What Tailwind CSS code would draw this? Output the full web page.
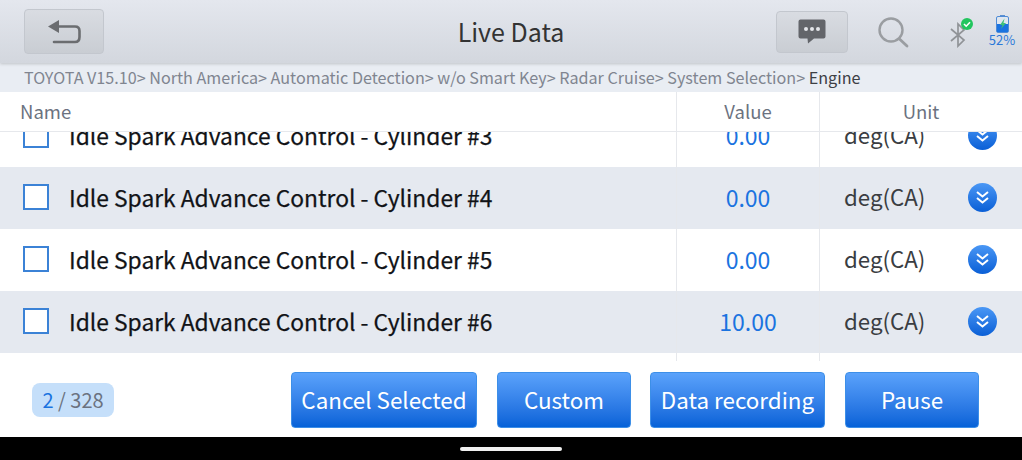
<!DOCTYPE html>
<html lang="en">
<head>
  <meta charset="UTF-8" />
  <title>Live Data</title>
  <script src="https://cdn.jsdelivr.net/npm/@tailwindcss/browser@4"></script>
</head>
<body class="w-[1022px] h-[460px] overflow-hidden bg-white flex flex-col font-['Noto_Sans_CJK_SC','Noto_Sans',sans-serif]">

  <!-- Title bar -->
  <header class="relative z-10 h-[63px] shrink-0 flex items-center pl-6 bg-gradient-to-b from-[#e4e7ee] to-[#d3d7de] shadow-[0_1px_3px_rgba(0,0,0,0.18)]">
    <button class="w-20 h-[45px] rounded border border-[#c3c7ce] bg-gradient-to-b from-[#d9dce2] to-[#c9cdd3] flex items-center justify-center">
      <svg width="34" height="25" viewBox="0 0 34 25" fill="none">
        <path d="M1 7.5 L12 1 V14 Z" fill="#6b6d70"/>
        <path d="M11 7.5 H28 Q32.5 7.5 32.5 12 V18 Q32.5 23 28 23 H7" stroke="#6b6d70" stroke-width="2.6" stroke-linecap="round"/>
      </svg>
    </button>
    <h1 class="absolute left-0 right-0 text-center text-[25px] leading-[63px] text-[#333] pointer-events-none">Live Data</h1>
    <button class="ml-[672px] w-[72px] h-[42px] rounded border border-[#c3c7ce] bg-gradient-to-b from-[#d9dce2] to-[#c9cdd3] flex items-center justify-center">
      <svg width="28" height="25" viewBox="0 0 28 25">
        <path d="M2.5 0.5 H25.5 Q27.5 0.5 27.5 2.5 V17.5 Q27.5 19.5 25.5 19.5 H16 L10 24.5 L9.5 19.5 H2.5 Q0.5 19.5 0.5 17.5 V2.5 Q0.5 0.5 2.5 0.5 Z" fill="#63656a"/>
        <circle cx="8" cy="10" r="2" fill="#e4e6ea"/><circle cx="14" cy="10" r="2" fill="#e4e6ea"/><circle cx="20" cy="10" r="2" fill="#e4e6ea"/>
      </svg>
    </button>
    <svg class="ml-[29px]" width="32" height="32" viewBox="0 0 32 32" fill="none">
      <circle cx="14" cy="14" r="11.5" stroke="#9a9da1" stroke-width="2.4"/>
      <path d="M22.5 23 L30 30" stroke="#9a9da1" stroke-width="2.8" stroke-linecap="round"/>
    </svg>
    <div class="relative ml-[40px] w-[26px] h-[30px] mt-[2px]">
      <svg class="absolute left-0 top-[4px]" width="18" height="26" viewBox="0 0 18 26" fill="none">
        <path d="M2 7 L15 18 L9 24 V2 L15 8 L2 19" stroke="#909397" stroke-width="1.7"/>
      </svg>
      <svg class="absolute left-[12px] top-0" width="12" height="12" viewBox="0 0 12 12">
        <circle cx="6" cy="6" r="6" fill="#22c55e"/>
        <path d="M3 6 L5.2 8.2 L9 4.2" stroke="#fff" stroke-width="1.6" fill="none"/>
      </svg>
    </div>
    <div class="ml-[13px] -mt-[2px] w-[28px] flex flex-col items-center">
      <svg width="13" height="18" viewBox="0 0 13 18">
        <rect x="4" y="0" width="5" height="2" fill="#5b8fd0"/>
        <rect x="0.5" y="1.5" width="12" height="16" rx="1.5" fill="#dfe6ef" stroke="#4f8bd6"/>
        <rect x="1" y="9" width="11" height="8" fill="#1a73e0"/>
        <path d="M8.5 3.5 L4 10 H6.5 L5 14 L10 8 H7.5 Z" fill="#3fc17a"/>
      </svg>
      <span class="text-[13px] leading-[14px] text-[#2a78d8]">52%</span>
    </div>
  </header>

  <!-- Breadcrumb -->
  <div class="h-[29px] shrink-0 bg-[#e9edf3] pl-6 text-[16.15px] leading-[28px] text-[#808590] whitespace-nowrap">
    TOYOTA V15.10&gt; North America&gt; Automatic Detection&gt; w/o Smart Key&gt; Radar Cruise&gt; System Selection&gt; <span class="text-[#3d4045]">Engine</span>
  </div>

  <!-- Column headers -->
  <div class="h-[40px] shrink-0 flex text-[18.5px] leading-[38px] text-[#6b7280] border-b border-[#e6e8ec]">
    <div class="w-[676px] pl-5">Name</div>
    <div class="w-[143px] text-center border-l border-[#e6e8ec]">Value</div>
    <div class="w-[203px] text-center border-l border-[#e6e8ec]">Unit</div>
  </div>

  <!-- Rows, scrolled so the first one is cut off by the header -->
  <div class="h-[229px] shrink-0 overflow-hidden relative">
    <div class="-mt-[27px]">
      <div class="h-[62px] flex items-center text-[#111317]">
        <div class="w-[676px] h-full flex items-center pl-[23px] pb-[2px] text-[22.8px] [-webkit-text-stroke:0.25px_#111317]">
          <span class="w-[26px] h-[26px] border-2 border-[#3b82d6] bg-white"></span>
          <span class="ml-5 mt-[2px]">Idle Spark Advance Control - Cylinder #3</span>
        </div>
        <div class="w-[143px] h-full flex items-center justify-center pb-[2px] border-l border-[#e6e8ec] text-[23px] text-[#1a73e0]">0.00</div>
        <div class="w-[203px] h-full flex items-center border-l border-[#e6e8ec] pl-6 pb-[2px] text-[22.3px] text-[#3a3d42]">
          <span class="w-[124px]">deg(CA)</span>
          <svg width="29" height="29" viewBox="0 0 29 29"><defs><linearGradient id="g" x1="0" y1="0" x2="0" y2="1"><stop offset="0" stop-color="#4a97f5"/><stop offset="1" stop-color="#0a5fd6"/></linearGradient></defs><circle cx="14.5" cy="14.5" r="14.5" fill="url(#g)"/><path d="M9 9 L14.5 13.5 L20 9 M9 15 L14.5 19.5 L20 15" stroke="#fff" stroke-width="2" fill="none"/></svg>
        </div>
      </div>
      <div class="h-[62px] flex items-center text-[#111317] bg-[#e5e9f0]">
        <div class="w-[676px] h-full flex items-center pl-[23px] pb-[2px] text-[22.8px] [-webkit-text-stroke:0.25px_#111317]">
          <span class="w-[26px] h-[26px] border-2 border-[#3b82d6] bg-white"></span>
          <span class="ml-5 mt-[2px]">Idle Spark Advance Control - Cylinder #4</span>
        </div>
        <div class="w-[143px] h-full flex items-center justify-center pb-[2px] border-l border-[#e6e8ec] text-[23px] text-[#1a73e0]">0.00</div>
        <div class="w-[203px] h-full flex items-center border-l border-[#e6e8ec] pl-6 pb-[2px] text-[22.3px] text-[#3a3d42]">
          <span class="w-[124px]">deg(CA)</span>
          <svg width="29" height="29" viewBox="0 0 29 29"><circle cx="14.5" cy="14.5" r="14.5" fill="url(#g)"/><path d="M9 9 L14.5 13.5 L20 9 M9 15 L14.5 19.5 L20 15" stroke="#fff" stroke-width="2" fill="none"/></svg>
        </div>
      </div>
      <div class="h-[62px] flex items-center text-[#111317]">
        <div class="w-[676px] h-full flex items-center pl-[23px] pb-[2px] text-[22.8px] [-webkit-text-stroke:0.25px_#111317]">
          <span class="w-[26px] h-[26px] border-2 border-[#3b82d6] bg-white"></span>
          <span class="ml-5 mt-[2px]">Idle Spark Advance Control - Cylinder #5</span>
        </div>
        <div class="w-[143px] h-full flex items-center justify-center pb-[2px] border-l border-[#e6e8ec] text-[23px] text-[#1a73e0]">0.00</div>
        <div class="w-[203px] h-full flex items-center border-l border-[#e6e8ec] pl-6 pb-[2px] text-[22.3px] text-[#3a3d42]">
          <span class="w-[124px]">deg(CA)</span>
          <svg width="29" height="29" viewBox="0 0 29 29"><circle cx="14.5" cy="14.5" r="14.5" fill="url(#g)"/><path d="M9 9 L14.5 13.5 L20 9 M9 15 L14.5 19.5 L20 15" stroke="#fff" stroke-width="2" fill="none"/></svg>
        </div>
      </div>
      <div class="h-[62px] flex items-center text-[#111317] bg-[#e5e9f0]">
        <div class="w-[676px] h-full flex items-center pl-[23px] pb-[2px] text-[22.8px] [-webkit-text-stroke:0.25px_#111317]">
          <span class="w-[26px] h-[26px] border-2 border-[#3b82d6] bg-white"></span>
          <span class="ml-5 mt-[2px]">Idle Spark Advance Control - Cylinder #6</span>
        </div>
        <div class="w-[143px] h-full flex items-center justify-center pb-[2px] border-l border-[#e6e8ec] text-[23px] text-[#1a73e0]">10.00</div>
        <div class="w-[203px] h-full flex items-center border-l border-[#e6e8ec] pl-6 pb-[2px] text-[22.3px] text-[#3a3d42]">
          <span class="w-[124px]">deg(CA)</span>
          <svg width="29" height="29" viewBox="0 0 29 29"><circle cx="14.5" cy="14.5" r="14.5" fill="url(#g)"/><path d="M9 9 L14.5 13.5 L20 9 M9 15 L14.5 19.5 L20 15" stroke="#fff" stroke-width="2" fill="none"/></svg>
        </div>
      </div>
      <div class="h-[62px] flex">
        <div class="w-[676px]"></div>
        <div class="w-[143px] border-l border-[#e6e8ec]"></div>
        <div class="w-[203px] border-l border-[#e6e8ec]"></div>
      </div>
    </div>
  </div>

  <!-- Footer actions -->
  <div class="h-[76px] shrink-0 flex items-start pt-[11px] pl-8">
    <div class="mt-[11px] w-[82px] h-[34px] rounded-lg bg-[#c5dffa] text-center text-[20px] leading-[33px] text-[#6b7280]"><span class="text-[#1a73e0]">2</span> / 328</div>
    <button class="ml-[177px] w-[186px] h-[56px] rounded border border-[#3d8fe8] bg-gradient-to-b from-[#5aa2fb] to-[#0562d8] text-white text-[22.4px]">Cancel Selected</button>
    <button class="ml-[20px] w-[134px] h-[56px] rounded border border-[#3d8fe8] bg-gradient-to-b from-[#5aa2fb] to-[#0562d8] text-white text-[22.4px]">Custom</button>
    <button class="ml-[19px] w-[175px] h-[56px] rounded border border-[#3d8fe8] bg-gradient-to-b from-[#5aa2fb] to-[#0562d8] text-white text-[22.4px]">Data recording</button>
    <button class="ml-[20px] w-[134px] h-[56px] rounded border border-[#3d8fe8] bg-gradient-to-b from-[#5aa2fb] to-[#0562d8] text-white text-[22.4px]">Pause</button>
  </div>

  <!-- Navigation bar -->
  <div class="h-[23px] shrink-0 bg-black flex items-center justify-center">
    <span class="w-[102px] h-[4px] rounded-full bg-[#f0f0f0]"></span>
  </div>
</body>
</html>
